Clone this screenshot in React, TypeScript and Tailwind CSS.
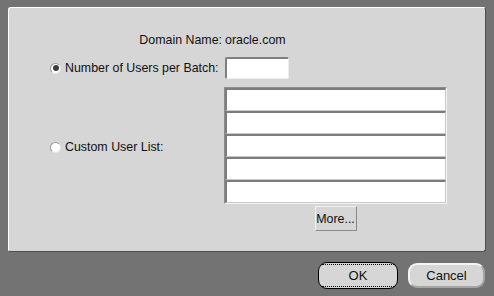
const font = "font-['Liberation_Sans',Arial,sans-serif]";

function Radio({ checked }: { checked?: boolean }) {
  return (
    <span className="flex h-[11px] w-[11px] shrink-0 items-center justify-center rounded-full border border-[#9a9a9a] border-b-[#e6e6e6] border-r-[#e6e6e6] bg-white">
      {checked && <span className="h-[6px] w-[6px] rounded-full bg-[#3c3c3c]" />}
    </span>
  );
}

function ListRow() {
  return (
    <div className="h-[23px] border-l-2 border-t-2 border-b border-r border-l-[#7c7c7c] border-t-[#7c7c7c] border-b-[#c9c9c9] border-r-[#c9c9c9] bg-white" />
  );
}

export default function App() {
  return (
    <div className={`flex h-[296px] w-[494px] flex-col bg-[#737373] px-[8px] pt-[7px] text-[12.4px] leading-[14px] text-[#111] ${font}`}>
      <div className="flex h-[245px] flex-col rounded-[3px] border border-l-white border-t-white border-b-[#4e4e4e] border-r-[#4e4e4e] bg-[#d6d6d6] pt-[25px]">
        <div className="flex">
          <div className="w-[216px] pr-[3px] text-right">Domain Name:</div>
          <div>oracle.com</div>
        </div>

        <div className="mt-[10px] flex items-center">
          <div className="flex w-[216px] items-center gap-[4px] pl-[41px]">
            <Radio checked />
            <span className="whitespace-nowrap">Number of Users per Batch:</span>
          </div>
          <div className="h-[22px] w-[64px] rounded-[2px] border-l-2 border-t-2 border-b border-r border-l-[#7f7f7f] border-t-[#7f7f7f] border-b-[#ececec] border-r-[#ececec] bg-white" />
        </div>

        <div className="mt-[8px] flex items-center">
          <div className="mt-[3px] flex w-[215px] items-center gap-[4px] pl-[41px]">
            <Radio />
            <span>Custom User List:</span>
          </div>
          <div className="w-[223px] border border-l-[#8c8c8c] border-t-[#8c8c8c] border-b-[#f4f4f4] border-r-[#f4f4f4]">
            <ListRow />
            <ListRow />
            <ListRow />
            <ListRow />
            <ListRow />
          </div>
        </div>

        <div className="mt-[2px] flex">
          <div className="w-[215px]" />
          <div className="flex w-[223px] justify-center">
            <button className="h-[25px] w-[42px] border border-l-[#f2f2f2] border-t-[#f2f2f2] border-b-[#8a8a8a] border-r-[#8a8a8a] bg-[#d6d6d6] text-[12.4px]">
              More...
            </button>
          </div>
        </div>
      </div>

      <div className="mt-[10px] flex items-start justify-end gap-[10px] pr-[1px]">
        <button className="flex h-[27px] w-[80px] items-center rounded-[9px] border border-black bg-[#d6d6d6] px-[3px]">
          <span className="flex h-[23px] w-full items-center justify-center border-y border-dotted border-black text-[13px]">
            OK
          </span>
        </button>
        <button className="mt-[1px] h-[25px] w-[77px] rounded-[9px] border-2 border-l-[#f4f4f4] border-t-[#f4f4f4] border-b-[#a4a4a4] border-r-[#a4a4a4] bg-[#d6d6d6] text-[13px]">
          Cancel
        </button>
      </div>
    </div>
  );
}
